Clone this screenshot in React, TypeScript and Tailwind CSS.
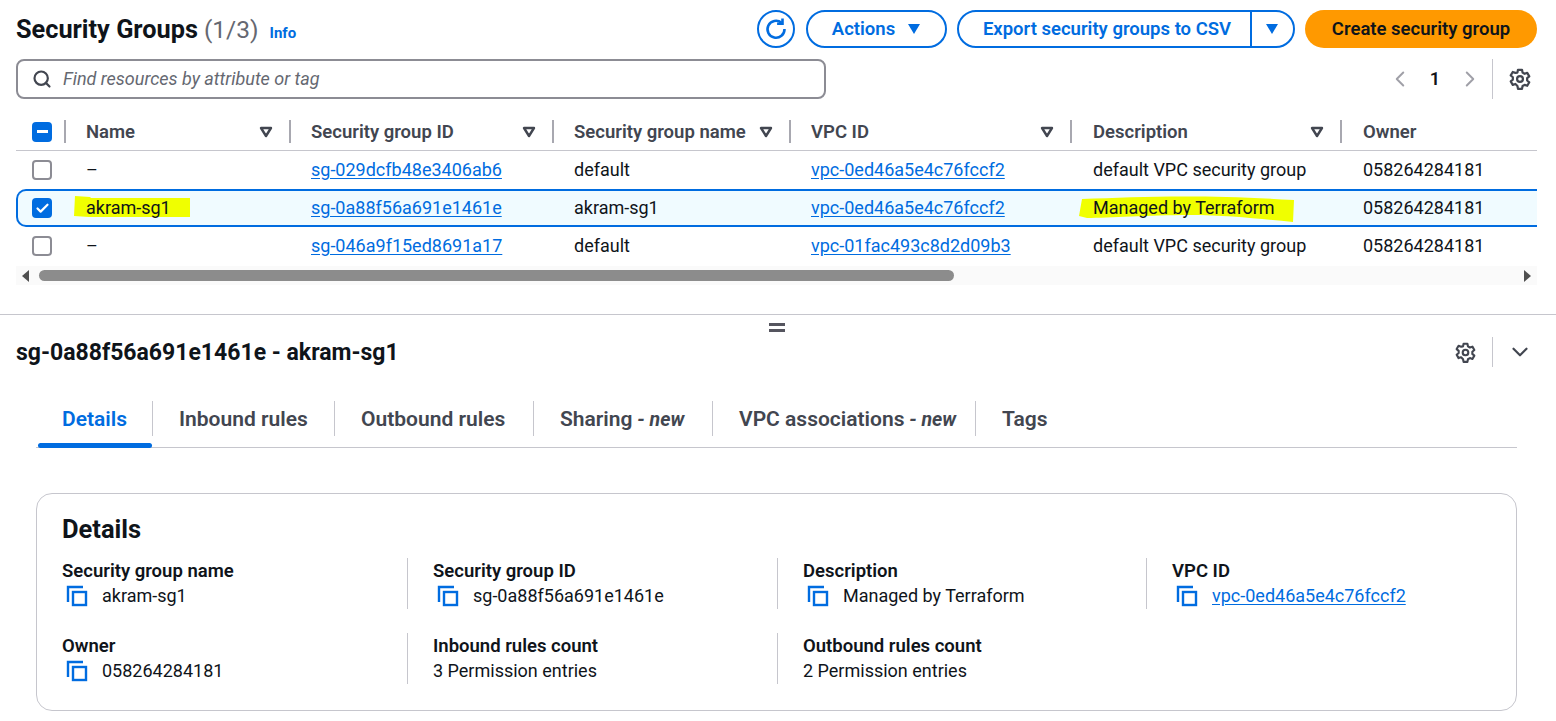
import React from "react";
import { Search, ChevronLeft, ChevronRight, ChevronDown, Check } from "lucide-react";

const Caret = ({ className = "" }: { className?: string }) => (
  <svg viewBox="0 0 14 12" className={className} width="14" height="12">
    <path d="M1 1h12L7 11z" fill="currentColor" />
  </svg>
);

const SortIcon = () => (
  <svg viewBox="0 0 14 12" width="14" height="12" className="text-[#424650]">
    <path d="M2 2h10L7 10z" fill="none" stroke="currentColor" strokeWidth="2.4" strokeLinejoin="round" />
  </svg>
);

const CopyIcon = () => (
  <svg viewBox="0 0 22 22" width="22" height="22" fill="none" stroke="#006ce0" strokeWidth="2.4" className="shrink-0">
    <path d="M2 17V2h15" />
    <rect x="7" y="7" width="13" height="13" />
  </svg>
);

const Refresh = () => (
  <svg viewBox="0 0 24 24" width="24" height="24" fill="none" stroke="#006ce0" strokeWidth="2.6">
    <path d="M17.500 5.800A8.500 8.500 0 1 0 20.500 12" />
    <path d="M18.500 1.500v5.200h-5.400" />
  </svg>
);

const Gear = ({ size }: { size: number }) => (
  <svg viewBox="0 0 24 24" width={size} height={size} fill="none" stroke="#424650" strokeWidth="2.4" strokeLinejoin="round">
    <path d="M9.800 2h4.400l.6 3 2.200 1.300 2.900-1 2.200 3.800-2.300 2v2.500l2.300 2-2.200 3.800-2.900-1-2.200 1.300-.6 3H9.800l-.6-3L7 17.400l-2.900 1-2.200-3.800 2.300-2v-2.500l-2.300-2 2.200-3.800 2.900 1L9.200 5z" />
    <circle cx="12" cy="12" r="3.200" />
  </svg>
);

const Box = ({ state }: { state: "none" | "checked" | "mixed" }) =>
  state === "none" ? (
    <div className="w-5 h-5 rounded-[4px] border-2 border-[#8c8c94] bg-white" />
  ) : (
    <div className="w-5 h-5 rounded-[4px] bg-[#006ce0] flex items-center justify-center">
      {state === "checked" ? (
        <Check size={15} strokeWidth={3.5} className="text-white" />
      ) : (
        <div className="w-[11px] h-[3px] bg-white" />
      )}
    </div>
  );

const Head = ({ label, pad, sort = true, mr }: { label: string; pad: string; sort?: boolean; mr: string }) => (
  <div className={`flex items-center justify-between ${pad} ${mr}`}>
    <span className="font-semibold text-[18.5px] text-[#424650] whitespace-nowrap">{label}</span>
    {sort && <SortIcon />}
  </div>
);

const Divided = ({ children }: { children: React.ReactNode }) => (
  <div className="flex items-center h-full -ml-px">
    <div className="w-0.5 h-[23px] bg-[#a8a8b0] shrink-0" />
    <div className="flex-1 min-w-0">{children}</div>
  </div>
);

const Lnk = ({ children }: { children: React.ReactNode }) => (
  <a className="text-[#006ce0] underline underline-offset-2">{children}</a>
);

type RowData = {
  name: string;
  id: string;
  sg: string;
  vpc: string;
  desc: string;
  selected?: boolean;
};

const rows: RowData[] = [
  { name: "–", id: "sg-029dcfb48e3406ab6", sg: "default", vpc: "vpc-0ed46a5e4c76fccf2", desc: "default VPC security group" },
  { name: "akram-sg1", id: "sg-0a88f56a691e1461e", sg: "akram-sg1", vpc: "vpc-0ed46a5e4c76fccf2", desc: "Managed by Terraform", selected: true },
  { name: "–", id: "sg-046a9f15ed8691a17", sg: "default", vpc: "vpc-01fac493c8d2d09b3", desc: "default VPC security group" },
];

const Row = ({ r }: { r: RowData }) => (
  <div
    className={`grid h-[38px] items-center ${
      r.selected
        ? "grid-cols-[47px_225px_263px_235px_283px_273px_193px] border-y-2 border-l-2 border-[#006ce0] rounded-l-[10px] bg-[#f0fbff]"
        : "grid-cols-[49px_225px_263px_235px_283px_273px_193px]"
    }`}
  >
    <div className={r.selected ? "pl-[14px]" : "pl-4"}>
      <Box state={r.selected ? "checked" : "none"} />
    </div>
    <div className="pl-[21px] relative">
      {r.selected && (
        <svg className="absolute left-[9px] top-0" width="116" height="22" viewBox="0 0 116 22">
          <path d="M1 0L16 1L17 2L116 2L116 21L15 21L0 20Z" fill="#f0ff00" />
        </svg>
      )}
      <span className="relative">{r.name}</span>
    </div>
    <div className="pl-[21px]"><Lnk>{r.id}</Lnk></div>
    <div className="pl-[21px]">{r.sg}</div>
    <div className="pl-[23px]"><Lnk>{r.vpc}</Lnk></div>
    <div className="pl-[22px] relative whitespace-nowrap">
      {r.selected && (
        <svg className="absolute left-2 top-[-2px]" width="216" height="30" viewBox="0 0 216 30">
          <path d="M3 5C60 3 120 0 215 6L214 28C180 25 150 21 110 21C70 21 30 24 8 24L0 22Z" fill="#f0ff00" />
        </svg>
      )}
      <span className="relative">{r.desc}</span>
    </div>
    <div className="pl-[19px]">058264284181</div>
  </div>
);

const Field = ({
  label,
  value,
  copy,
  link,
  first,
}: {
  label: string;
  value?: string;
  copy?: boolean;
  link?: boolean;
  first?: boolean;
}) => (
  <div className={`h-[51px] pl-[25px] ${first ? "" : "border-l border-[#c6c6cd]"}`}>
    <div className="font-semibold text-[18.5px] leading-[25px] h-[24px] mt-px whitespace-nowrap">{label}</div>
    <div className="flex items-center h-[25px] gap-[14px]">
      {copy && (
        <div className="pl-1 flex items-center">
          <CopyIcon />
        </div>
      )}
      {link ? <Lnk>{value}</Lnk> : <span>{value}</span>}
    </div>
  </div>
);

const Tab = ({ label, italic, active, w }: { label: string; italic?: string; active?: boolean; w: string }) => (
  <div className={`h-[35px] pt-[3px] font-semibold whitespace-nowrap text-[21px] leading-[30px] ${w} ${
    active ? "pl-[26px] text-[#006ce0]" : "pl-[26px] text-[#424650]"
  } ${label === "Tags" ? "" : "border-r border-[#c6c6cd]"}`}>
    {label}
    {italic && <span className="italic text-[19.5px] font-bold"> - {italic}</span>}
  </div>
);

export default function App() {
  return (
    <div className="w-[1556px] h-[721px] overflow-hidden bg-white text-[#0f141a] text-[18px] leading-[24px] font-['Roboto',sans-serif]">
      {/* Header */}
      <div className="flex items-center justify-between h-[38px] mt-[10px] ml-4 mr-[19px]">
        <div className="flex items-baseline pt-[2px]">
          <h1 className="text-[25.300px] font-bold leading-[30px]">Security Groups</h1>
          <span className="text-[24.500px] text-[#656871] ml-[6px]">(1/3)</span>
          <a className="text-[15px] font-bold text-[#006ce0] ml-[11px]">Info</a>
        </div>
        <div className="flex items-center gap-[10px] font-semibold text-[18.500px]">
          <button className="w-[38px] h-[38px] mr-px rounded-full border-2 border-[#006ce0] flex items-center justify-center">
            <Refresh />
          </button>
          <button className="w-[141px] h-[38px] rounded-[20px] border-2 border-[#006ce0] text-[#006ce0] flex items-center justify-center gap-3">
            Actions <Caret />
          </button>
          <div className="flex w-[338px] h-[38px] rounded-[20px] border-2 border-[#006ce0] text-[#006ce0]">
            <div className="w-[293px] border-r-2 border-[#006ce0] pl-[5px] flex items-center justify-center whitespace-nowrap">
              Export security groups to CSV
            </div>
            <div className="flex-1 flex items-center justify-center pr-[2px]">
              <Caret />
            </div>
          </div>
          <button className="w-[232px] h-[38px] rounded-[20px] bg-[#ff9900] flex items-center justify-center">
            Create security group
          </button>
        </div>
      </div>

      {/* Filter row */}
      <div className="flex items-center justify-between h-[40px] mt-[11px] ml-4 mr-[25px]">
        <div className="w-[810px] h-full rounded-[8px] border-2 border-[#8c8c94] flex items-center pl-[14px] gap-[11px]">
          <Search size={20} strokeWidth={2.6} className="text-[#424650]" />
          <span className="italic text-[#656871]">Find resources by attribute or tag</span>
        </div>
        <div className="flex items-center h-full">
          <ChevronLeft size={26} strokeWidth={1.8} className="text-[#a0a0a8]" />
          <span className="w-[44px] text-center font-semibold">1</span>
          <ChevronRight size={26} strokeWidth={1.8} className="text-[#a0a0a8]" />
          <div className="w-px h-full bg-[#c6c6cd] ml-[9px] mr-[16px]" />
          <Gear size={22} />
        </div>
      </div>

      {/* Table */}
      <div className="ml-4 w-[1521px] mt-[14px]">
        <div className="grid grid-cols-[49px_225px_263px_237px_281px_270px_196px] h-[38px] items-center border-b border-[#c6c6cd]">
          <div className="pl-4">
            <Box state="mixed" />
          </div>
          <Divided><Head label="Name" pad="pl-[20px]" mr="mr-[17px]" /></Divided>
          <Divided><Head label="Security group ID" pad="pl-[20px]" mr="mr-[17px]" /></Divided>
          <Divided><Head label="Security group name" pad="pl-[20px]" mr="mr-[17px]" /></Divided>
          <Divided><Head label="VPC ID" pad="pl-[20px]" mr="mr-[17px]" /></Divided>
          <Divided><Head label="Description" pad="pl-[21px]" mr="mr-[17px]" /></Divided>
          <Divided><Head label="Owner" pad="pl-[21px]" mr="mr-0" sort={false} /></Divided>
        </div>
        {rows.map((r) => (
          <Row key={r.id} r={r} />
        ))}
        {/* Scrollbar */}
        <div className="flex items-center h-[19px] bg-[#fafafa] mt-px">
          <svg width="8" height="12" viewBox="0 0 8 12" className="ml-[6px] mr-[9px]">
            <path d="M7 0v12L0 6z" fill="#505050" />
          </svg>
          <div className="w-[915px] h-[11px] rounded-full bg-[#8c8c8c]" />
          <div className="flex-1" />
          <svg width="8" height="12" viewBox="0 0 8 12" className="mr-[6px]">
            <path d="M1 0v12L8 6z" fill="#505050" />
          </svg>
        </div>
      </div>

      {/* Split */}
      <div className="mt-[29px] border-t border-[#c6c6cd] h-px" />
      <div className="flex flex-col items-center gap-[3px] mt-[8px] h-[9px] pr-[2px]">
        <div className="w-[16px] h-[3px] bg-[#55555f]" />
        <div className="w-[16px] h-[3px] bg-[#55555f]" />
      </div>

      {/* Detail heading */}
      <div className="flex items-center justify-between ml-4 mr-[23px] mt-[3px] h-[36px]">
        <h2 className="text-[23px] font-bold">sg-0a88f56a691e1461e - akram-sg1</h2>
        <div className="flex items-center h-[30px] -translate-y-px">
          <Gear size={21} />
          <div className="w-px h-full bg-[#c6c6cd] ml-4 mr-[14px]" />
          <ChevronDown size={26} strokeWidth={2} className="text-[#424650]" />
        </div>
      </div>

      {/* Tabs */}
      <div className="relative ml-9 w-[1481px] h-[47px] mt-[30px] border-b border-[#c6c6cd] flex">
        <Tab active label="Details" w="w-[117px]" />
        <Tab label="Inbound rules" w="w-[182px]" />
        <Tab label="Outbound rules" w="w-[199px]" />
        <Tab label="Sharing" italic="new" w="w-[179px]" />
        <Tab label="VPC associations" italic="new" w="w-[263px]" />
        <Tab label="Tags" w="" />
        <div className="absolute left-[2px] bottom-[-1px] w-[114px] h-[5px] rounded-[3px] bg-[#006ce0]" />
      </div>

      {/* Details card */}
      <div className="ml-9 w-[1481px] h-[218px] mt-[45px] border border-[#c6c6cd] rounded-[16px] pt-[20px]">
        <h3 className="pl-[25px] text-[25.500px] font-bold leading-[30px]">Details</h3>
        <div className="grid grid-cols-[370px_370px_369px_370px] gap-y-[24px] mt-[14px]">
          <Field first label="Security group name" value="akram-sg1" copy />
          <Field label="Security group ID" value="sg-0a88f56a691e1461e" copy />
          <Field label="Description" value="Managed by Terraform" copy />
          <Field label="VPC ID" value="vpc-0ed46a5e4c76fccf2" copy link />
          <Field first label="Owner" value="058264284181" copy />
          <Field label="Inbound rules count" value="3 Permission entries" />
          <Field label="Outbound rules count" value="2 Permission entries" />
        </div>
      </div>
    </div>
  );
}
